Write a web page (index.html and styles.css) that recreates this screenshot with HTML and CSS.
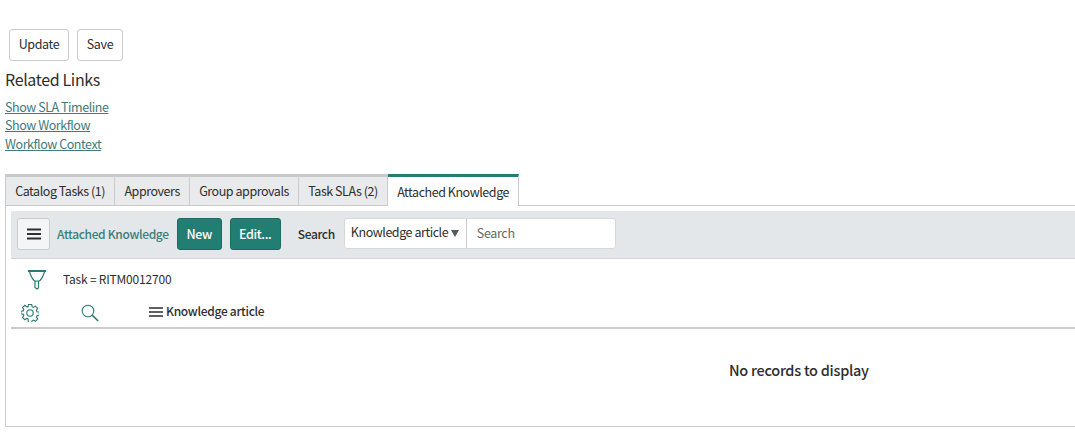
FILE: index.html
```html
<!DOCTYPE html>
<html lang="en">
<head>
<meta charset="utf-8">
<title>Attached Knowledge</title>
<link rel="stylesheet" href="styles.css">
</head>
<body>
<div class="actions">
  <button class="btn">Update</button>
  <button class="btn">Save</button>
</div>
<h2 class="related-title">Related Links</h2>
<ul class="links">
  <li><a href="#">Show SLA Timeline</a></li>
  <li><a href="#">Show Workflow</a></li>
  <li><a href="#">Workflow Context</a></li>
</ul>
<div class="tabs">
  <div class="tab tab-first">Catalog Tasks (1)</div>
  <div class="tab">Approvers</div>
  <div class="tab">Group approvals</div>
  <div class="tab">Task SLAs (2)</div>
  <div class="tab tab-active">Attached Knowledge</div>
</div>
<section class="panel">
  <div class="toolbar">
    <button class="menu-btn" aria-label="Menu">
      <svg width="14" height="12" viewBox="0 0 14 12"><path d="M0 1.500h14M0 6h14M0 10.500h14" stroke="#2e2e2e" stroke-width="2"/></svg>
    </button>
    <span class="list-title">Attached Knowledge</span>
    <button class="btn-primary btn-new">New</button>
    <button class="btn-primary btn-edit">Edit...</button>
    <span class="search-label">Search</span>
    <div class="search">
      <div class="search-field">Knowledge article<span class="caret"></span></div>
      <div class="search-input">Search</div>
    </div>
  </div>
  <div class="filter-row">
    <svg class="filter-icon" width="20" height="20" viewBox="0 0 20 20" fill="none" stroke="#2a7a72"><path d="M1 1h18" stroke-width="2"/><path d="M2.500 2Q4.500 8 7 10.500Q7.500 11 8 11h4q.5 0 1-.5Q15.500 8 17.500 2" stroke-width="1.100"/><path d="M8 11v6.500l2 1.500 1.500-1v-7" stroke-width="1.200"/></svg>
    <span class="filter-text">Task = RITM0012700</span>
  </div>
  <div class="head-row">
    <svg class="gear" width="18" height="18" viewBox="0 0 18 18" fill="none" stroke="#2a7a72" stroke-width="1.100"><path d="M7.400.6h3.200l.4 2.300 1.400.6 1.900-1.300 2.300 2.300-1.300 1.900.6 1.400 2.300.4v3.200l-2.300.4-.6 1.400 1.300 1.900-2.300 2.300-1.900-1.300-1.400.6-.4 2.300H7.400L7 15.100l-1.400-.6-1.900 1.300-2.300-2.300 1.300-1.900-.6-1.400-2.300-.4V7.400l2.300-.4.600-1.400-1.300-1.900 2.300-2.300 1.900 1.300L7 2.900z" transform="translate(.1 -.1)"/><circle cx="9" cy="9" r="3.200"/></svg>
    <svg class="magnifier" width="18" height="18" viewBox="0 0 18 18" fill="none" stroke="#2a7a72"><circle cx="7" cy="7" r="5.800" stroke-width="1.100"/><path d="m11.200 11.200 6 5.800" stroke-width="1.600"/></svg>
    <span class="col-head">
      <svg width="14" height="10" viewBox="0 0 14 10"><path d="M0 1h14M0 5h14M0 9h14" stroke="#2e2e2e" stroke-width="1.700"/></svg>
      Knowledge article
    </span>
  </div>
  <div class="empty">No records to display</div>
</section>
</body>
</html>
```
FILE: styles.css
```css
* { box-sizing: border-box; }
html, body { margin: 0; padding: 0; }
body {
  width: 1075px;
  height: 443px;
  overflow: hidden;
  background: #fff;
  color: #2e2e2e;
  font-family: "Noto Sans CJK SC", "Noto Sans", sans-serif;
  font-size: 12.500px;
  letter-spacing: -0.350px;
}
button { font-family: inherit; letter-spacing: inherit; cursor: pointer; }

.actions { display: flex; gap: 8px; padding: 29px 0 0 9px; }
.btn {
  height: 32px;
  padding: 0 0 3px;
  background: #fff;
  border: 1px solid #cbcbcb;
  border-radius: 3px;
  color: #2e2e2e;
  font-size: 12.500px;
}
.btn:first-child { width: 60px; }
.btn:last-child { width: 46px; }

.related-title {
  margin: 6px 0 0 5px;
  font-size: 16px;
  font-weight: 400;
  line-height: 24px;
  color: #2e2e2e;
}
.links {
  list-style: none;
  margin: 6.700px 0 0 5px;
  padding: 0;
  letter-spacing: -0.450px;
  line-height: 18.500px;
}
.links a { color: #3f7a7c; text-decoration: underline; }

.tabs { display: flex; margin: 20.800px 0 0 5px; height: 32px; border-bottom: 1px solid #cbcbcb; }
.tab {
  height: 31px;
  padding: 0 9.200px;
  display: flex;
  align-items: center;
  background: #e8eaec;
  border-top: 3px solid #c9c9c9;
  border-right: 1px solid #cbcbcb;
  color: #2e2e2e;
  letter-spacing: -0.450px;
}
.tab-first { border-left: 1px solid #cbcbcb; }
.tab-active {
  height: 32px;
  background: #fff;
  border-top-color: #227d72;
  border-left: 0;
}

.panel {
  height: 221px;
  margin-left: 5px;
  padding: 5px 0 0 5px;
  border-left: 1px solid #cbcbcb;
  border-bottom: 1px solid #cbcbcb;
}
.toolbar {
  display: flex;
  align-items: center;
  height: 48px;
  padding-left: 6px;
  background: #e4e7ea;
  border-bottom: 1px solid #d2d4d6;
}
.menu-btn {
  width: 33px;
  height: 32px;
  display: flex;
  align-items: center;
  justify-content: center;
  padding: 0;
  background: #f4f5f6;
  border: 1px solid #cbcbcb;
  border-radius: 3px;
}
.list-title {
  margin-left: 7px;
  padding-bottom: 2px;
  font-size: 12px;
  font-weight: 500;
  color: #3b7f78;
}
.btn-primary {
  height: 32px;
  padding: 0 0 2px;
  background: #227d72;
  border: 1px solid #1c6a62;
  border-radius: 3px;
  color: #fff;
  font-size: 12.500px;
  font-weight: 500;
}
.btn-new { width: 45px; margin-left: 8px; }
.btn-edit { width: 51px; margin-left: 8px; }
.search-label { margin-left: 17px; padding-bottom: 2px; font-size: 12px; font-weight: 500; }
.search {
  display: flex;
  width: 272px;
  height: 31px;
  margin: 0 0 2px 9px;
  background: #fff;
  border: 1px solid #d6d8da;
  border-radius: 3px;
}
.search-field {
  display: flex;
  flex: none;
  align-items: center;
  width: 122px;
  padding: 0 0 3px 6px;
  border-right: 1px solid #cbcbcb;
  letter-spacing: -0.450px;
  white-space: nowrap;
}
.caret {
  width: 0;
  height: 0;
  margin-left: 3px;
  margin-top: 3px;
  border-left: 4px solid transparent;
  border-right: 4px solid transparent;
  border-top: 7px solid #55595c;
}
.search-input { display: flex; align-items: center; padding: 0 0 2px 10px; color: #666; }

.filter-row { display: flex; align-items: center; height: 42px; padding-left: 16px; }
.filter-text { margin-left: 16px; padding-bottom: 2px; font-size: 12px; letter-spacing: -0.200px; }
.filter-icon { margin-top: 1px; }

.head-row {
  display: flex;
  align-items: center;
  height: 28px;
  padding: 0 0 2px 10px;
  border-bottom: 2px solid #cbcbcb;
}
.head-row .magnifier { margin-left: 42px; }
.col-head {
  display: flex;
  align-items: center;
  gap: 3px;
  margin-left: 50px;
  padding-bottom: 4px;
  font-size: 12px;
  font-weight: 500;
  letter-spacing: -0.300px;
}
.col-head svg { margin-top: 2px; }
.empty {
  margin-top: 30px;
  padding-left: 718px;
  font-size: 14.500px;
  font-weight: 500;
  letter-spacing: -0.280px;
  line-height: 22px;
}
```
